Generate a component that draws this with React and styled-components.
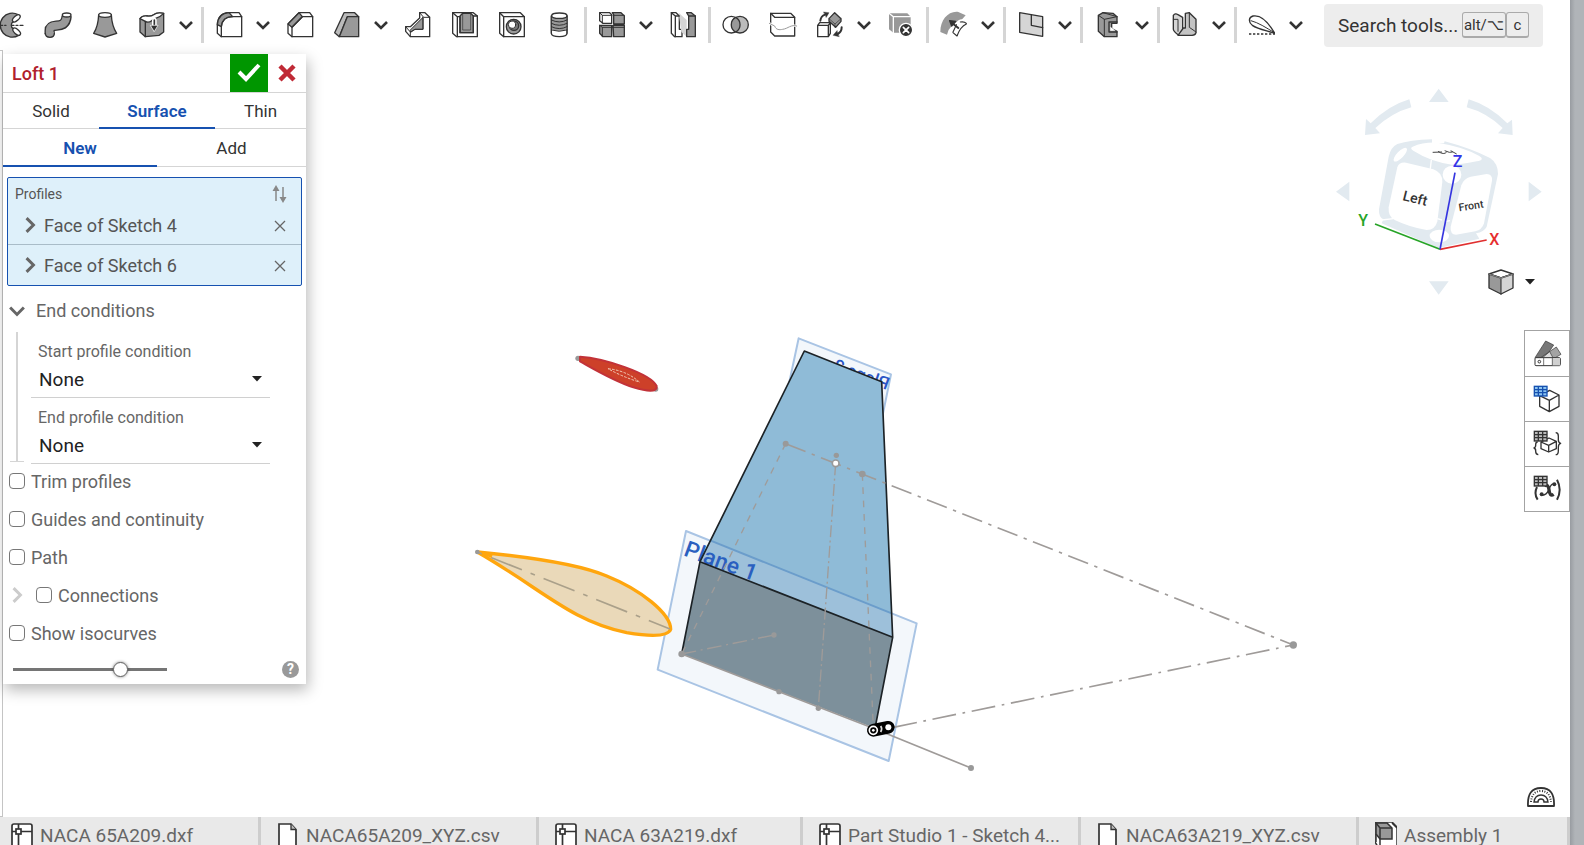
import React from "react";
import styled, { createGlobalStyle, css } from "styled-components";

const INK = "#333";
const FILL = "#999";
const BLUE = "#1651b0";

const GlobalStyle = createGlobalStyle`
  *, *::before, *::after { box-sizing: border-box; }
  body { margin: 0; background: #fff; color: #333; font-family: Roboto, "Liberation Sans", sans-serif; }
  button, input, select { font: inherit; color: inherit; }
  button { border: 0; padding: 0; background: none; cursor: pointer; }
`;

const Page = styled.div`
  display: grid;
  grid-template-columns: minmax(0, 1fr) 14px;
  height: 100vh;
  overflow: hidden;
`;
const Gutter = styled.div`
  background: linear-gradient(to right, #989ca1, #b0b4b8 5px);
`;
const Main = styled.main`
  display: flex;
  flex-direction: column;
  min-width: 0;
  min-height: 0;
`;

/* ---------- Toolbar ---------- */
const Toolbar = styled.header`
  display: flex;
  align-items: center;
  flex: 0 0 50px;
  overflow: hidden;
`;
const Tools = styled.div`
  display: flex;
  align-items: center;
  flex: none;
  margin-left: -13px;
`;
const ToolButton = styled.button`
  display: flex;
  justify-content: center;
  width: 47px;
  height: 36px;
  align-items: center;
`;
const MoreButton = styled.button`
  display: flex;
  align-items: center;
  justify-content: center;
  width: 22px;
  height: 36px;
  margin-right: 2px;
`;
const Divider = styled.span`
  width: 3px;
  height: 36px;
  margin: 0 1px 0 2px;
  background: #d5d5d5;
`;
const Search = styled.label`
  display: flex;
  align-items: center;
  flex: none;
  width: 219px;
  height: 43px;
  margin-left: 15px;
  padding: 0 14px;
  border-radius: 4px;
  background: #ededed;
`;
const SearchInput = styled.input`
  width: 124px;
  padding: 0;
  border: 0;
  outline: 0;
  background: none;
  font-size: 19px;
  &::placeholder { color: #333; opacity: 1; }
`;
const Key = styled.kbd`
  display: flex;
  align-items: center;
  justify-content: center;
  flex: none;
  height: 26px;
  width: ${(p) => (p.$wide ? 44 : 23)}px;
  border: 1px solid #aaa;
  border-bottom-width: 2px;
  border-radius: 3px;
  font: 15px Roboto, "DejaVu Sans", sans-serif;
  white-space: nowrap;
`;

/* ---------- Viewport ---------- */
const Viewport = styled.section`
  position: relative;
  display: flex;
  align-items: flex-start;
  flex: 1;
  min-height: 0;
`;
const CollapsedList = styled.div`
  align-self: stretch;
  width: 3px;
  border: 1px solid #c4c4c4;
  border-left: 0;
`;
const Scene = styled.svg`
  position: absolute;
  inset: 0;
  width: 100%;
  height: 100%;
`;
const CubeArea = styled.div`
  position: absolute;
  top: 30px;
  right: 20px;
  line-height: 0;
`;
const ViewButton = styled.button`
  position: absolute;
  top: 218px;
  right: 35px;
  display: flex;
  align-items: center;
  gap: 10px;
`;
const SideTools = styled.nav`
  position: absolute;
  top: 280px;
  right: 0;
  display: flex;
  flex-direction: column;
  border: 1px solid #a3a3a3;
  background: #fff;
`;
const SideButton = styled.button`
  display: flex;
  align-items: center;
  justify-content: center;
  width: 44px;
  height: 45px;
  & + & { border-top: 1px solid #a3a3a3; }
`;
const MeasureButton = styled.button`
  position: absolute;
  right: 15px;
  bottom: 9px;
  line-height: 0;
`;

/* ---------- Feature panel ---------- */
const Panel = styled.form`
  position: relative;
  width: 303px;
  margin-top: 4px;
  background: #fff;
  box-shadow: 2px 6px 14px rgba(0, 0, 0, 0.28);
  color: #666;
  font-size: 18px;
`;
const PanelHeader = styled.div`
  display: flex;
  align-items: center;
  height: 39px;
  padding-left: 9px;
  border-bottom: 1px solid #d5d5d5;
`;
const PanelTitle = styled.h1`
  flex: 1;
  margin: 0;
  color: #b0202c;
  font-size: 18px;
  font-weight: 500;
`;
const HeaderButton = styled.button`
  display: flex;
  align-items: center;
  justify-content: center;
  width: 38px;
  height: 38px;
  background: ${(p) => (p.$accept ? "#009600" : "none")};
`;
const TabRow = styled.div`
  display: grid;
  grid-template-columns: ${(p) => p.$columns};
  height: ${(p) => p.$height}px;
  border-bottom: 1px solid #d5d5d5;
`;
const Tab = styled.button`
  height: 100%;
  color: #333;
  font-size: 17px;
  ${(p) =>
    p.$active &&
    css`
      color: ${BLUE};
      font-weight: 600;
      box-shadow: 0 1px ${BLUE}, inset 0 -1px ${BLUE};
    `}
`;
const Profiles = styled.div`
  margin: 10px 4px 0;
  border: 1px solid ${BLUE};
  border-radius: 2px;
  background: #def0fa;
`;
const ProfilesHead = styled.div`
  display: flex;
  justify-content: space-between;
  align-items: center;
  height: 28px;
  padding: 4px 14px 0 7px;
  color: #555;
  font-size: 14px;
`;
const ProfileRow = styled.div`
  display: flex;
  align-items: center;
  height: ${(p) => (p.$last ? 40 : 39)}px;
  padding: 0 15px 0 14px;
  color: #555;
  border-bottom: ${(p) => (p.$last ? 0 : 1)}px solid #a9bcc8;
`;
const Expand = styled.button`
  display: flex;
  width: 22px;
`;
const Grow = styled.span`
  flex: 1;
`;
const GroupHead = styled.button`
  display: flex;
  align-items: center;
  gap: 11px;
  height: 43px;
  margin-top: 3px;
  padding-left: 6px;
`;
const Group = styled.div`
  position: relative;
  margin-left: 13px;
  padding-left: 13px;
  height: 130px;
  border-left: 2px solid #d5d5d5;
  &::after {
    content: "";
    position: absolute;
    left: -8px;
    bottom: 0;
    width: 14px;
    height: 1px;
    background: #d5d5d5;
  }
`;
const Field = styled.label`
  display: block;
  width: 239px;
  height: 66px;
  padding-top: 8px;
  border-bottom: 1px solid #d0d0d0;
  font-size: 16px;
  line-height: 24px;
  position: relative;
  & > span { padding-left: 7px; }
  & > svg { position: absolute; right: 8px; bottom: 15px; }
`;
const Select = styled.select`
  display: block;
  width: 100%;
  height: 32px;
  padding: 0 8px;
  border: 0;
  outline: 0;
  appearance: none;
  background: none;
  color: #222;
  font-size: 19px;
`;
const Checks = styled.div`
  display: flex;
  flex-direction: column;
`;
const CheckRow = styled.div`
  display: flex;
  align-items: center;
  height: 38px;
  padding-left: 6px;
`;
const CheckLabel = styled.label`
  display: flex;
  align-items: center;
  gap: 6px;
`;
const Nested = styled.span`
  display: flex;
  width: 27px;
`;
const Check = styled.input`
  appearance: none;
  width: 16px;
  height: 16px;
  margin: 0;
  border: 1px solid #777;
  border-radius: 4px;
  background: #fff;
`;
const PanelFooter = styled.div`
  display: flex;
  align-items: center;
  justify-content: space-between;
  height: 32px;
  padding: 2px 7px 0 10px;
`;
const Slider = styled.input`
  appearance: none;
  width: 154px;
  height: 16px;
  margin: 0;
  background: linear-gradient(#757575, #757575) center / 100% 3px no-repeat;
  &::-webkit-slider-thumb {
    appearance: none;
    width: 15px;
    height: 15px;
    border: 1px solid #666;
    border-radius: 50%;
    background: #fff;
    box-shadow: 0 0 3px rgba(0, 0, 0, 0.5);
  }
`;
const Help = styled.button`
  width: 17px;
  height: 17px;
  border-radius: 50%;
  background: #999;
  color: #fff;
  font-size: 14px;
  font-weight: 700;
  line-height: 17px;
`;

/* ---------- Document tabs ---------- */
const DocTabs = styled.nav`
  display: flex;
  flex: 0 0 28px;
  overflow: hidden;
  background: #e9e9e9;
`;
const DocTab = styled.a`
  display: flex;
  align-items: center;
  gap: 7px;
  flex: 0 0 ${(p) => p.$width}px;
  height: 36px;
  padding-left: ${(p) => (p.$first ? 11 : 16)}px;
  border-right: 3px solid #cdcdcd;
  color: #666;
  font-size: 19px;
  text-decoration: none;
  white-space: nowrap;
`;

/* ---------- Small glyphs ---------- */
const Chevron = ({ color = INK, turn = 0, size = 14 }) => (
  <svg width={size} height={size} viewBox="0 0 14 14" aria-hidden="true">
    <path d="M1 4 L7 10 L13 4" transform={`rotate(${turn} 7 7)`} fill="none" stroke={color} strokeWidth="2.6" />
  </svg>
);
const Caret = () => (
  <svg width="10" height="6" viewBox="0 0 10 6" aria-hidden="true">
    <path d="M0 0 H10 L5 5.5 Z" fill="#222" />
  </svg>
);
const Cross = () => (
  <svg width="12" height="12" viewBox="0 0 12 12" aria-hidden="true">
    <path d="M1 1 L11 11 M11 1 L1 11" stroke="#666" strokeWidth="1.3" />
  </svg>
);

/* ---------- Toolbar icons, on a 90 unit grid ---------- */
const icons = {
  revolve: (
    <>
      <path d="M66 14 A36 36 0 1 0 68 76 L52 56 A12 12 0 0 1 52 35 Z" fill={FILL} />
      <ellipse cx="61" cy="25" rx="7" ry="14" transform="rotate(48 61 25)" fill="#fff" />
      <ellipse cx="62" cy="65" rx="7" ry="14" transform="rotate(-48 62 65)" fill="#fff" />
      <path d="M11 46 H20 M26 46 H30 M48 46 H54 M60 46 H66 M72 46 H81" />
    </>
  ),
  sweep: (
    <>
      <path d="M20 73 V62 C20 32 68 66 71 18" strokeWidth="31" strokeLinecap="butt" />
      <path d="M20 69 V62 C20 32 68 66 71 16" stroke={FILL} strokeWidth="23" strokeLinecap="butt" />
      <ellipse cx="21" cy="73" rx="13.5" ry="9" fill={FILL} stroke="none" />
      <path d="M7 70 Q7 82 21 82 Q34 82 34 70" />
      <ellipse cx="71" cy="15" rx="13" ry="6" fill="#fff" />
    </>
  ),
  loft: (
    <>
      <path d="M26 14 C25 40 21 54 11 70 L45 81 L80 70 C70 54 65 40 64 14" fill={FILL} />
      <ellipse cx="45" cy="15" rx="19" ry="7" fill="#fff" />
    </>
  ),
  thicken: (
    <>
      <path d="M9 26 C22 8 34 26 50 14 C60 6 70 8 80 10 V66 L66 76 L25 80 L9 66 Z" fill={FILL} />
      <path d="M9 26 C22 8 34 26 50 14 C60 6 70 8 80 10 C66 26 50 24 44 32 Q34 40 25 34 Z" fill="#fff" />
      <path d="M25 34 V80" />
      <path d="M52 30 V46" stroke="#fff" strokeWidth="14" />
      <path d="M52 30 V54" strokeWidth="5" />
      <path d="M41 46 H63 L52 64 Z" fill={INK} stroke="#fff" strokeWidth="2" />
    </>
  ),
  fillet: (
    <>
      <path d="M10 44 Q12 10 45 8 H75 L83 20 V80 H22 L10 70 Z" fill="#fff" />
      <path d="M10 44 Q12 10 45 8 L56 20 Q25 20 22 50 Z" fill={FILL} />
      <path d="M22 80 V50 Q25 20 56 20 H83" />
    </>
  ),
  chamfer: (
    <>
      <path d="M9 42 L42 8 H74 L83 20 V80 H21 L9 70 Z" fill="#fff" />
      <path d="M9 42 L42 8 L52 20 L21 52 Z" fill={FILL} />
      <path d="M21 80 V52 L52 20 H83" />
    </>
  ),
  draft: (
    <>
      <path d="M22 80 L46 20 H80 L68 8 H36 L8 68 Z" fill="#bbb" />
      <path d="M22 80 L46 20 H80 V80 Z" fill={FILL} />
    </>
  ),
  rib: (
    <>
      <path d="M8 50 H22 L50 24 V8 H66 L80 22 V80 H22 L8 64 Z" fill="#fff" />
      <path d="M22 60 L60 22 V58 H36 L24 66 Z" fill={FILL} strokeWidth="3" />
      <path d="M50 8 L62 22 H80 M60 22 V58 H36 L22 66 V80 M8 50 L22 66" strokeWidth="3" />
    </>
  ),
  shell: (
    <>
      <path d="M8 8 H70 L82 18 V80 H20 L8 70 Z" fill="#fff" />
      <path d="M30 18 L38 10 H62 L70 18 V68 H30 Z" fill={FILL} />
      <path d="M8 8 L22 20 V80 M22 20 H30 V68 H70 V18 H82" />
      <path d="M38 10 V60 H62 V10" strokeWidth="2" />
    </>
  ),
  hole: (
    <>
      <path d="M8 8 H70 L82 20 V80 H20 L8 70 Z" fill="#fff" />
      <path d="M8 8 L20 20 H82 M20 20 V80" />
      <circle cx="50" cy="50" r="22" fill={FILL} />
      <circle cx="51" cy="47" r="14" fill="#777" />
      <circle cx="45" cy="44" r="11" fill="#fff" strokeWidth="3" />
    </>
  ),
  thread: (
    <>
      <path d="M22 18 V70 Q22 80 46 80 Q69 80 69 70 V18" fill="#fff" />
      <path d="M22 22 V58 Q46 68 69 58 V22 Z" fill={FILL} stroke="none" />
      <ellipse cx="46" cy="17" rx="23" ry="8" fill="#fff" />
      <path d="M22 30 Q46 42 69 30 M22 40 Q46 52 69 40 M22 50 Q46 62 69 50 M22 60 Q46 68 69 60 M22 18 V70 M69 18 V70" strokeWidth="3" />
    </>
  ),
  pattern: (
    <>
      <path d="M8 8 H38 L44 14 V40 H18 L8 32 Z" fill="#fff" />
      <path d="M46 8 H72 L82 18 V42 H50 V14 Z M8 46 H44 V80 H18 L8 70 Z M48 46 H82 V80 H50 Z" fill={FILL} />
      <path d="M8 8 L16 16 H44 M16 16 V40 M48 16 H82 M8 46 L16 52 H82 M16 52 V80" strokeWidth="3" />
    </>
  ),
  mirror: (
    <>
      <path d="M10 8 H24 L34 18 V58 H42 V80 H20 L10 70 Z" fill="#fff" />
      <path d="M32 8 L56 30 V80 L40 66" fill="#d5d5d5" stroke="none" />
      <path d="M56 8 H70 L82 18 V80 H56 V58 H62 V18 Z" fill={FILL} />
      <path d="M10 8 L22 18 H34 M22 18 V80 M62 18 H82" />
    </>
  ),
  boolean: (
    <>
      <circle cx="31" cy="44" r="25" fill="#fff" />
      <circle cx="57" cy="44" r="25" fill="#bbb" />
      <path d="M44 22 A25 25 0 0 1 44 66 A25 25 0 0 1 44 22 Z" fill={FILL} />
    </>
  ),
  split: (
    <>
      <path d="M8 10 H68 L80 22 V78 H20 L8 66 Z" fill="#fff" />
      <path d="M8 10 L20 22 H80" />
      <path d="M4 40 L20 48 C24 60 34 60 44 58 C60 56 70 42 86 48" stroke="#fff" strokeWidth="7" />
      <path d="M4 40 L20 48 C24 60 34 60 44 58 C60 56 70 42 86 48" stroke="#999" strokeWidth="3" />
    </>
  ),
  transform: (
    <>
      <path d="M8 46 L14 38 H46 V70 L40 80 H8 Z M8 46 H40 V80 M40 46 L46 38" fill="#fff" />
      <path d="M59 8 L78 26 V34 L62 52 L42 34 V26 Z" fill={FILL} />
      <path d="M42 26 L60 42 L78 26 M60 42 V52" strokeWidth="2" />
      <path d="M16 32 Q18 18 30 14" strokeWidth="6" />
      <path d="M26 6 L42 8 L34 22 Z" fill={INK} strokeWidth="1" />
      <path d="M80 52 Q80 66 68 72" strokeWidth="6" />
      <path d="M72 80 L54 76 L66 62 Z" fill={INK} strokeWidth="1" />
    </>
  ),
  remove: (
    <>
      <path d="M9 10 H64 L74 20 V68 H22 L9 58 Z" fill={FILL} stroke="none" />
      <path d="M9 10 L22 20 H74 M22 20 V70" stroke="#fff" />
      <circle cx="60" cy="60" r="20" fill={INK} stroke="#fff" />
      <path d="M52 52 L68 68 M68 52 L52 68" stroke="#fff" strokeWidth="5" />
    </>
  ),
  face: (
    <>
      <path d="M4 66 C4 30 28 2 58 6 L80 16 L64 34 Q30 44 24 74 Z" fill={FILL} stroke="none" />
      <path d="M50 50 C54 38 64 30 76 34 L84 42 Q64 52 56 78 L40 66 Z" fill="#fff" stroke="#fff" strokeWidth="10" />
      <path d="M42 66 Q50 50 52 44 M64 36 Q76 34 82 40 M82 42 Q64 50 54 78 M42 68 L54 78" strokeWidth="3.5" />
      <path d="M38 38 L58 54" strokeWidth="6" />
      <path d="M32 32 L50 34 L38 48 Z" fill={INK} />
    </>
  ),
  plane: (
    <>
      <path d="M11 8 L80 20 V79 L11 67 Z" fill="#d5d5d5" />
      <path d="M46 14 V46 L80 53" />
    </>
  ),
  frame: (
    <>
      <path d="M16 16 L30 8 L60 10 L72 20 V40 H56 V56 L72 64 V80 H34 L16 64 Z" fill={FILL} />
      <path d="M16 16 L34 28 L72 20 M34 28 V80 M30 8 L72 20" strokeWidth="3" />
      <path d="M48 36 H72 M48 36 V66 H72" strokeWidth="4" />
      <path d="M52 50 L68 62 H52 Z" fill="#fff" stroke="none" />
    </>
  ),
  sheet: (
    <>
      <path d="M10 16 Q16 8 24 14 L38 22 V66 L66 76 H26 Q10 64 10 58 Z" fill="#d5d5d5" />
      <path d="M46 10 L58 8 L78 28 V68 Q76 76 66 76 H24 L40 54 H46 Z" fill="#c4c4c4" />
      <path d="M58 8 V52 L78 66 M10 28 H24 V64" strokeWidth="3" />
    </>
  ),
  airfoil: (
    <>
      <path d="M82 68 C60 30 40 14 18 18 C4 22 4 36 16 46 C34 58 60 62 82 70 Z" fill="#fff" />
      <path d="M12 32 C34 38 56 52 82 68" strokeWidth="3" />
      <path d="M6 72 H84" strokeWidth="4" strokeDasharray="7 5" strokeLinecap="butt" />
    </>
  ),
};

const Glyph = ({ name }) => (
  <svg width="30" height="30" viewBox="0 0 90 90" aria-hidden="true" fill="none" stroke={INK} strokeWidth="4" strokeLinejoin="round" strokeLinecap="round">
    {icons[name]}
  </svg>
);

const toolbar = [
  "revolve", "sweep", "loft", "thicken", "v", "|",
  "fillet", "v", "chamfer", "draft", "v", "rib", "shell", "hole", "thread", "|",
  "pattern", "v", "mirror", "|",
  "boolean", "split", "transform", "v", "remove", "|",
  "face", "v", "|", "plane", "v", "|", "frame", "v", "|", "sheet", "v", "|", "airfoil", "v",
];

/* ---------- 3D scene ---------- */
const Model = () => (
  <Scene aria-label="Part preview">
    <g transform="translate(460 280) scale(0.33333)" strokeLinejoin="round">
      <g stroke="#a9c4e4" strokeWidth="6" fill="#f3f7fb">
        <path d="M1016 25 L1293 133 L1265 270 L985 170 Z" />
        <path d="M678 603 L1370 880 L1286 1293 L593 1019 Z" />
      </g>
      <text transform="translate(1280 180) rotate(20) scale(-1 1)" fontSize="52" fontWeight="500" fill="#2a56c6">Plane 2</text>
      <path d="M1033 63 L1265 155 L1298 922 L720 695 Z" fill="#8fbbd7" />
      <path d="M752 632 L1295 850 L1298 922 L720 695 Z" fill="#9dc0da" />
      <path d="M752 632 L1295 850" stroke="#6b9dcb" strokeWidth="6" />
      <text transform="translate(668 676) rotate(20)" fontSize="68" fontWeight="500" fill="#2a5fc0">Plane 1</text>
      <path d="M720 695 L1298 922 L1245 1195 L665 972 Z" fill="#7d909b" />
      <path d="M665 972 L720 695 L1033 63 L1265 155 L1298 922 L1245 1195 M720 695 L1298 922" fill="none" stroke="#1c2226" strokeWidth="5" />

      <g fill="none" stroke="#9f9b99" strokeWidth="5">
        <path d="M665 972 L1240 1195 L1533 1314" />
        <path d="M977 341 L2500 945" strokeDasharray="64 20 10 20" />
        <path d="M1300 1192 L2500 945" strokeDasharray="72 20 8 20" />
        <path d="M977 341 L665 972" strokeDasharray="20 20" strokeWidth="4" />
        <path d="M1207 432 L1240 1195" strokeDasharray="20 20" strokeWidth="4" />
        <path d="M1127 400 L1075 1135" strokeDasharray="36 10 6 10" strokeWidth="4" />
        <path d="M665 972 L942 915" strokeDasharray="44 14 6 14" strokeWidth="4" />
      </g>
      <g fill="#999">
        <circle cx="977" cy="341" r="9" />
        <circle cx="1129" cy="376" r="8" />
        <circle cx="1207" cy="432" r="10" />
        <circle cx="665" cy="972" r="10" />
        <circle cx="942" cy="915" r="8" />
        <circle cx="957" cy="1085" r="8" />
        <circle cx="1075" cy="1135" r="8" />
        <circle cx="2500" cy="945" r="11" />
        <circle cx="1533" cy="1314" r="9" />
      </g>
      <circle cx="1127" cy="400" r="10" fill="#fff" stroke="#999" strokeWidth="5" />

      <path d="M1240 1201 L1285 1192" stroke="#000" strokeWidth="38" strokeLinecap="round" />
      <circle cx="1285" cy="1192" r="9" fill="#fff" />
      <path d="M1262 1188 Q1268 1196 1262 1206" fill="none" stroke="#ddd" strokeWidth="5" />
      <circle cx="1240" cy="1201" r="12" fill="#000" stroke="#fff" strokeWidth="5" />
      <circle cx="1240" cy="1201" r="4" fill="#fff" />

      <path d="M52 666 C220 682 360 704 440 738 C540 778 632 850 632 898 C624 922 560 918 500 908 C330 872 250 780 52 666 Z" fill="#ead9b9" stroke="#ffa60e" strokeWidth="10" />
      <path d="M52 666 L630 897" stroke="#aaa08a" strokeWidth="5" strokeDasharray="100 28 14 28" strokeDashoffset="-44" />
      <circle cx="52" cy="666" r="7" fill="#999" />
      <path d="M66 668 L96 680" stroke="#ffa60e" strokeWidth="9" />
      <circle cx="354" cy="85" r="8" fill="#999" />
      <circle cx="587" cy="177" r="8" fill="#999" />
      <path d="M360 80 C430 84 572 130 590 168 C592 188 560 184 520 172 C460 152 410 122 360 94 Z" fill="#cd4029" stroke="#c23238" strokeWidth="6" />
      <path d="M444 116 Q500 122 538 156 Q486 140 444 116" fill="none" stroke="#f0c9b4" strokeWidth="3" strokeDasharray="8 4" />
    </g>
  </Scene>
);

const ViewCube = () => (
  <svg width="230" height="220" viewBox="0 0 690 660" role="img" aria-label="View cube">
    <g fill="#e2eaf0">
      <path d="M327 66 L356 26 L386 66 Z M327 604 L386 604 L356 644 Z M88 305 V364 L48 335 Z M626 305 V364 L665 335 Z" />
      <path d="M268 58 L274 82 Q216 98 166 144 L180 160 L135 165 L138 117 L152 130 Q206 76 268 58 Z" />
      <path d="M446 58 L440 82 Q500 98 548 144 L534 160 L578 165 L576 119 L562 130 Q508 76 446 58 Z" />
      <path d="M336 178 Q270 180 232 192 Q212 202 206 230 L177 388 Q176 412 190 418 L185 430 L355 505 L478 476 L468 460 Q492 456 500 440 L534 282 Q534 250 510 234 Q450 204 374 184 L372 190 H336 Z" />
    </g>
    <g fill="#fff">
      <path d="M278 200 Q310 186 352 188 Q430 200 478 228 Q496 240 470 244 Q420 254 396 254 Q330 244 280 212 Q268 204 278 200 Z" />
      <ellipse cx="241" cy="224" rx="10" ry="27" transform="rotate(44 241 224)" />
      <path d="M232 262 Q236 246 258 248 L340 268 Q368 278 367 306 L352 424 Q346 450 320 450 Q270 442 224 420 Q204 410 206 382 Z" />
      <path d="M424 316 Q430 296 452 290 L500 282 Q518 282 516 302 L492 430 Q486 450 466 454 L408 464 Q390 464 392 440 Z" />
      <ellipse cx="396" cy="284" rx="28" ry="27" />
      <ellipse cx="358" cy="468" rx="29" ry="19" />
    </g>
    <path d="M334 240 L330 274 M352 416 L366 420 M378 424 L390 422 M186 420 L220 416" stroke="#fff" strokeWidth="4" />
    <path d="M338 217 L366 216 M354 214 Q372 226 380 216 M374 212 Q390 220 398 216 M392 212 L410 222" stroke="#444" strokeWidth="3" fill="none" />
    <g fill="#333" fontWeight="500">
      <text x="246" y="360" transform="rotate(14 246 360)" fontSize="42">Left</text>
      <text x="418" y="394" transform="rotate(-9 418 394)" fontSize="32">Front</text>
    </g>
    <g strokeWidth="5">
      <path d="M165 432 L360 508" stroke="#27a427" />
      <path d="M360 508 L500 480" stroke="#e03030" />
      <path d="M360 508 L405 278" stroke="#3535e0" />
    </g>
    <g fontSize="48" fontWeight="500">
      <text x="115" y="438" fill="#27a427">Y</text>
      <text x="508" y="496" fill="#e62e2e">X</text>
      <text x="398" y="262" fill="#3535e8">Z</text>
    </g>
  </svg>
);

const Grid = ({ color, cell }) => (
  <g stroke="none">
    <rect x="2" y="2" width="42" height="33" fill={color} />
    <path
      d="M6 6 H14 V12 H6 Z M18 6 H27 V12 H18 Z M31 6 H40 V12 H31 Z M6 16 H14 V21 H6 Z M18 16 H27 V21 H18 Z M31 16 H40 V21 H31 Z M6 25 H14 V31 H6 Z M18 25 H27 V31 H18 Z M31 25 H40 V31 H31 Z"
      fill={cell}
    />
  </g>
);
const SideGlyph = ({ children }) => (
  <svg width="29" height="29" viewBox="0 0 87 87" aria-hidden="true" fill="none" stroke={INK} strokeWidth="4" strokeLinejoin="round">
    {children}
  </svg>
);

const DrawingIcon = () => (
  <svg width="22" height="26" viewBox="0 0 22 26" fill="none" stroke={INK} strokeWidth="1.7" aria-hidden="true">
    <rect x="1" y="2" width="20" height="28" rx="2" fill="#fff" />
    <path d="M1 9.5 H5 M10 9.5 H21 M7.5 2 V7 M7.5 12 V30" />
    <rect x="5" y="7" width="5" height="5" />
  </svg>
);
const FileIcon = () => (
  <svg width="22" height="26" viewBox="0 0 22 26" fill="none" stroke={INK} strokeWidth="1.7" aria-hidden="true">
    <path d="M2 2 H14 L19 7.5 V30 H2 Z" fill="#fff" />
    <path d="M14 2 V7.5 H19" fill="#bbb" strokeWidth="1.3" />
  </svg>
);
const AssemblyIcon = () => (
  <svg width="22" height="26" viewBox="0 0 22 26" fill="none" stroke={INK} strokeWidth="1.5" aria-hidden="true">
    <path d="M0 0 H17 L22 5 V30 H6 L0 20 Z" fill="#fff" />
    <path d="M1 1 H12 L17 6 V17 H5 L1 12 Z" fill={FILL} />
    <path d="M1 1 L5 6 H17 M5 6 V17 M5 17 V30 M17 1 L22 6 M1 12 V20" />
  </svg>
);

const documents = [
  { name: "NACA 65A209.dxf", icon: DrawingIcon, width: 261 },
  { name: "NACA65A209_XYZ.csv", icon: FileIcon, width: 278 },
  { name: "NACA 63A219.dxf", icon: DrawingIcon, width: 264 },
  { name: "Part Studio 1 - Sketch 4...", icon: DrawingIcon, width: 278 },
  { name: "NACA63A219_XYZ.csv", icon: FileIcon, width: 278 },
  { name: "Assembly 1", icon: AssemblyIcon, width: 211 },
];

const options = ["Trim profiles", "Guides and continuity", "Path", "Connections", "Show isocurves"];

const ConditionField = ({ label }) => (
  <Field>
    <span>{label}</span>
    <Select defaultValue="None">
      <option>None</option>
      <option>Normal to profile</option>
      <option>Tangent to profile</option>
    </Select>
    <Caret />
  </Field>
);

const LoftPanel = () => (
  <Panel onSubmit={(e) => e.preventDefault()}>
    <PanelHeader>
      <PanelTitle>Loft 1</PanelTitle>
      <HeaderButton $accept aria-label="Accept">
        <svg width="24" height="20" viewBox="0 0 24 20" aria-hidden="true">
          <path d="M2 9 L9 16 L22 2" fill="none" stroke="#fff" strokeWidth="4" />
        </svg>
      </HeaderButton>
      <HeaderButton type="button" aria-label="Cancel">
        <svg width="18" height="18" viewBox="0 0 18 18" aria-hidden="true">
          <path d="M2 2 L16 16 M16 2 L2 16" stroke="#c02a36" strokeWidth="4.5" />
        </svg>
      </HeaderButton>
    </PanelHeader>
    <TabRow $columns="96px 116px 1fr" $height={36}>
      <Tab type="button">Solid</Tab>
      <Tab type="button" $active>Surface</Tab>
      <Tab type="button">Thin</Tab>
    </TabRow>
    <TabRow $columns="154px 1fr" $height={38}>
      <Tab type="button" $active>New</Tab>
      <Tab type="button">Add</Tab>
    </TabRow>
    <Profiles>
      <ProfilesHead>
        <span>Profiles</span>
        <svg width="15" height="20" viewBox="0 0 15 20" aria-hidden="true">
          <path d="M4 17 V5 M11 3 V15" stroke="#888" strokeWidth="1.5" />
          <path d="M0.5 7 L4 1 L7.500 7 Z M7.500 13 L11 19 L14.500 13 Z" fill="#888" />
        </svg>
      </ProfilesHead>
      {["Face of Sketch 4", "Face of Sketch 6"].map((name, i) => (
        <ProfileRow key={name} $last={i === 1}>
          <Expand type="button" aria-label={`Expand ${name}`}>
            <Chevron color="#666" turn={-90} size={16} />
          </Expand>
          <Grow>{name}</Grow>
          <button type="button" aria-label={`Remove ${name}`}><Cross /></button>
        </ProfileRow>
      ))}
    </Profiles>
    <GroupHead type="button">
      <Chevron color="#666" size={16} />
      End conditions
    </GroupHead>
    <Group>
      <ConditionField label="Start profile condition" />
      <ConditionField label="End profile condition" />
    </Group>
    <Checks>
      {options.map((name) => (
        <CheckRow key={name}>
          {name === "Connections" && (
            <Nested><Chevron color="#ccc" turn={-90} size={16} /></Nested>
          )}
          <CheckLabel><Check type="checkbox" />{name}</CheckLabel>
        </CheckRow>
      ))}
    </Checks>
    <PanelFooter>
      <Slider type="range" defaultValue="72" aria-label="Preview opacity" />
      <Help type="button" aria-label="Help">?</Help>
    </PanelFooter>
  </Panel>
);

export default function App() {
  return (
    <Page>
      <GlobalStyle />
      <Main>
        <Toolbar>
          <Tools>
            {toolbar.map((item, i) => {
              if (item === "|") return <Divider key={i} />;
              if (item === "v") return <MoreButton key={i} aria-label="More tools"><Chevron /></MoreButton>;
              return <ToolButton key={i} aria-label={item}><Glyph name={item} /></ToolButton>;
            })}
          </Tools>
          <Search>
            <SearchInput type="text" placeholder="Search tools..." aria-label="Search tools" />
            <Key $wide>alt/⌥</Key>
            <Key>c</Key>
          </Search>
        </Toolbar>
        <Viewport>
          <Model />
          <CollapsedList />
          <LoftPanel />
          <CubeArea><ViewCube /></CubeArea>
          <ViewButton aria-label="View options">
            <svg width="28" height="28" viewBox="0 0 84 84" aria-hidden="true" stroke={INK} strokeWidth="4" strokeLinejoin="round">
              <path d="M6 18 L42 6 L78 18 L42 30 Z" fill="#fff" />
              <path d="M6 18 L42 30 V78 L6 60 Z" fill="#999" />
              <path d="M78 18 L42 30 V78 L78 60 Z" fill="#d5d5d5" />
              <path d="M6 18 L42 30 L78 18 M42 30 V76" stroke="#aaa" strokeWidth="2" fill="none" />
            </svg>
            <Caret />
          </ViewButton>
          <SideTools>
            <SideButton aria-label="Appearance">
              <SideGlyph>
                <path d="M6 56 L38 6 L62 18 L34 60 Z" fill="#777" strokeWidth="2" />
                <path d="M20 58 L70 24 L84 46 L50 66 Z" fill="#a3a3a3" strokeWidth="2" />
                <path d="M24 60 L50 38 L62 60 Z" fill="#ddd" strokeWidth="2" />
                <rect x="6" y="56" width="76" height="24" rx="3" fill="#fff" strokeWidth="3" />
                <path d="M58 57 H81 V79 H58 Z" fill="#d0d0d0" stroke="none" />
                <path d="M32 57 V79 M58 57 V79" strokeWidth="2" />
                <circle cx="19" cy="68" r="4" strokeWidth="3" />
              </SideGlyph>
            </SideButton>
            <SideButton aria-label="Configurations">
              <SideGlyph>
                <path d="M20 32 L50 16 L78 30 V64 L49 80 L20 64 Z M20 32 L49 46 L78 30 M49 46 V80" fill="#fff" />
                <Grid color="#1651b0" cell="#8cc4f0" />
              </SideGlyph>
            </SideButton>
            <SideButton aria-label="Part properties">
              <SideGlyph>
                <path d="M24 36 L48 24 L70 34 V56 L47 66 L24 56 Z M24 36 L47 46 L70 34 M47 46 V66" fill="#fff" />
                <path d="M14 36 Q8 36 8 44 Q9 52 3 54 Q9 56 8 64 Q8 74 16 74 M68 8 Q76 8 76 18 V30 Q76 38 83 40 Q76 42 76 52 V62 Q76 74 68 74" />
                <Grid color="#333" cell="#bbb" />
              </SideGlyph>
            </SideButton>
            <SideButton aria-label="Variables">
              <SideGlyph>
                <path d="M12 36 Q2 56 14 74 M72 14 Q88 44 72 74" strokeWidth="6" />
                <path d="M34 32 Q46 26 48 44 Q50 66 62 58" strokeWidth="10" />
                <path d="M66 28 Q54 22 48 44 Q38 64 24 60" strokeWidth="4" />
                <circle cx="64" cy="28" r="6" fill={INK} stroke="none" />
                <circle cx="26" cy="58" r="6" fill={INK} stroke="none" />
                <Grid color="#333" cell="#bbb" />
              </SideGlyph>
            </SideButton>
          </SideTools>
          <MeasureButton aria-label="Measure">
            <svg width="28" height="22" viewBox="0 0 28 22" fill="none" stroke={INK} aria-hidden="true">
              <path d="M1 20 Q0 2 14 2 Q28 2 27 20 Z" strokeWidth="1.8" strokeLinejoin="round" />
              <path d="M4 16 Q5 5 14 5 Q23 5 24 16" strokeWidth="2" strokeDasharray="1 1.5" />
              <path d="M7 16 Q8 9 14 9 Q20 9 21 16 H17 Q17 13 14 13 Q11 13 11 16 Z" strokeWidth="1.4" />
            </svg>
          </MeasureButton>
        </Viewport>
        <DocTabs>
          {documents.map(({ name, icon: Icon, width }, i) => (
            <DocTab key={name} href="#" $width={width} $first={i === 0}>
              <Icon />
              {name}
            </DocTab>
          ))}
        </DocTabs>
      </Main>
      <Gutter />
    </Page>
  );
}
